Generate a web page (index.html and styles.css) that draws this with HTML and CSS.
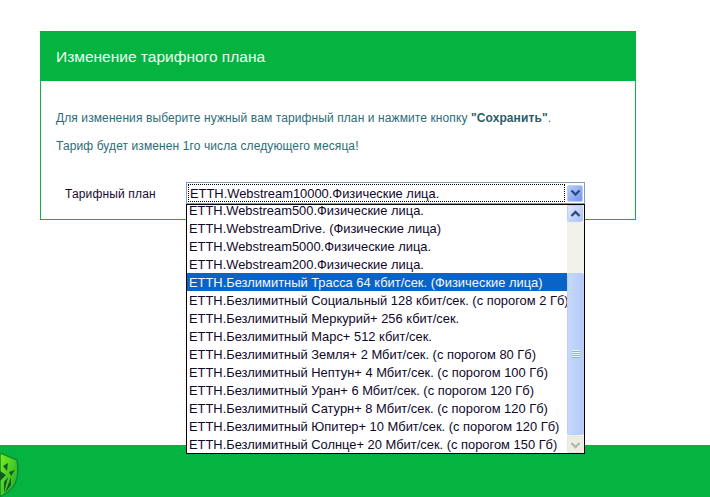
FILE: index.html
```html
<!DOCTYPE html>
<html lang="ru">
<head>
    <meta charset="UTF-8">
    <title>Изменение тарифного плана</title>
    <link rel="stylesheet" href="styles.css">
</head>
<body>
    <main class="page">
        <section class="card">
            <h1 class="card-title">Изменение тарифного плана</h1>
            <div class="card-body">
                <p class="note">Для изменения выберите нужный вам тарифный план и нажмите кнопку <strong>"Сохранить"</strong>.</p>
                <p class="note">Тариф будет изменен 1го числа следующего месяца!</p>
                <div class="field">
                    <span class="field-label">Тарифный план</span>
                    <div class="select">
                        <div class="select-box">
                            <span class="select-value">ETTH.Webstream10000.Физические лица.</span>
                            <span class="sb-btn sb-btn-main">
                                <svg width="11" height="8" viewBox="0 0 11 8"><path d="M1.5 1.5 5.5 5.5 9.5 1.5" fill="none" stroke="#2f4b7c" stroke-width="2.4"/></svg>
                            </span>
                        </div>
                        <div class="dropdown">
                            <ul class="options">
                                <li>ETTH.Webstream500.Физические лица.</li>
                                <li>ETTH.WebstreamDrive. (Физические лица)</li>
                                <li>ETTH.Webstream5000.Физические лица.</li>
                                <li>ETTH.Webstream200.Физические лица.</li>
                                <li class="is-selected">ETTH.Безлимитный Трасса 64 кбит/сек. (Физические лица)</li>
                                <li>ETTH.Безлимитный Социальный 128 кбит/сек. (с порогом 2 Гб)</li>
                                <li>ETTH.Безлимитный Меркурий+ 256 кбит/сек.</li>
                                <li>ETTH.Безлимитный Марс+ 512 кбит/сек.</li>
                                <li>ETTH.Безлимитный Земля+ 2 Мбит/сек. (с порогом 80 Гб)</li>
                                <li>ETTH.Безлимитный Нептун+ 4 Мбит/сек. (с порогом 100 Гб)</li>
                                <li>ETTH.Безлимитный Уран+ 6 Мбит/сек. (с порогом 120 Гб)</li>
                                <li>ETTH.Безлимитный Сатурн+ 8 Мбит/сек. (с порогом 120 Гб)</li>
                                <li>ETTH.Безлимитный Юпитер+ 10 Мбит/сек. (с порогом 120 Гб)</li>
                                <li>ETTH.Безлимитный Солнце+ 20 Мбит/сек. (с порогом 150 Гб)</li>
                            </ul>
                            <div class="scrollbar">
                                <span class="sb-btn">
                                    <svg width="11" height="8" viewBox="0 0 11 8"><path d="M1.5 6 5.5 2 9.5 6" fill="none" stroke="#2f4b7c" stroke-width="2.4"/></svg>
                                </span>
                                <div class="sb-track">
                                    <div class="sb-thumb"><span class="sb-grip"></span></div>
                                </div>
                                <span class="sb-btn sb-btn-off">
                                    <svg width="11" height="8" viewBox="0 0 11 8"><path d="M1.5 2 5.5 6 9.5 2" fill="none" stroke="#b4b9a8" stroke-width="2.4"/></svg>
                                </span>
                            </div>
                        </div>
                    </div>
                </div>
            </div>
        </section>
    </main>
    <footer class="footer">
        <svg class="logo" width="22" height="44" viewBox="0 0 22 44">
            <defs>
                <linearGradient id="shield" x1="0" y1="0" x2="1" y2="1">
                    <stop offset="0" stop-color="#7ff01e"/>
                    <stop offset="1" stop-color="#17a52c"/>
                </linearGradient>
            </defs>
            <path d="M0 0 17 7 Q20 24 13 34 Q8 40 0 44Z" fill="url(#shield)" stroke="#0c8f33" stroke-width="1.5"/>
            <path d="M3 13 8 10 7 18ZM9 19 15 17 11 23ZM4 29 8 24 4 40ZM0 18 6 22 0 28ZM11 24 11 32 5 40Z" fill="#0f5c24"/>
        </svg>
    </footer>
</body>
</html>
```

FILE: styles.css
```css
* { box-sizing: border-box; }
html, body { height: 100%; }
body {
    margin: 0;
    height: 497px;
    overflow: hidden;
    display: flex;
    flex-direction: column;
    background: #fff;
    font-family: "Liberation Sans", Arial, sans-serif;
}
.page {
    flex: 1;
    padding: 31px 74px 0 40px;
}
.card {
    height: 189px;
    border: 1px solid #0cb540;
}
.card-title {
    margin: -1px -1px 0;
    height: 50px;
    padding: 0 16px;
    background: #05b440;
    color: #eefff4;
    font-size: 15.5px;
    font-weight: 400;
    line-height: 52px;
}
.card-body { padding: 30px 15px 0; }
.note {
    margin: 0 0 14px;
    color: #2c6c78;
    font-size: 12px;
    letter-spacing: 0.1px;
    line-height: 14px;
}
.note strong { color: #2c5c68; }
.field {
    display: flex;
    align-items: flex-start;
    margin-top: 29px;
}
.field-label {
    width: 130px;
    padding: 5px 0 0 9px;
    color: #1a0a33;
    font-size: 12px;
    letter-spacing: 0.15px;
    line-height: 14px;
}
.select {
    position: relative;
    width: 399px;
}
.select-box {
    display: flex;
    align-items: center;
    height: 22px;
    padding: 1px;
    border: 1px solid #7f9db9;
    background: #fff;
}
.select-value {
    flex: 1;
    height: 18px;
    margin-right: 2px;
    padding-left: 1px;
    border: 1px dotted #000;
    color: #10082a;
    font-size: 12.9px;
    line-height: 18px;
    white-space: nowrap;
}
.sb-btn {
    display: flex;
    align-items: center;
    justify-content: center;
    width: 16px;
    height: 17px;
    flex: none;
    border: 1px solid #bcd0f5;
    border-radius: 2px;
    background: linear-gradient(135deg, #dfe9fd, #a9c3f7);
}
.sb-btn-main { background: linear-gradient(135deg, #b7cdf9, #6f95ee); }
.sb-btn-off {
    border-color: #e8e8e0;
    background: #eeede5;
}
.dropdown {
    position: absolute;
    top: 22px;
    left: 0;
    z-index: 5;
    display: flex;
    width: 399px;
    height: 250px;
    border: 1px solid #000;
    background: #fff;
    overflow: hidden;
}
.options {
    flex: 1;
    min-width: 0;
    margin: 0;
    padding: 0;
    list-style: none;
    color: #10082a;
    font-size: 12.9px;
}
.options li {
    height: 18px;
    padding-left: 2px;
    line-height: 20px;
    white-space: nowrap;
}
.options li:first-child { margin-top: -4px; }
.options .is-selected {
    background: #0a64c8;
    color: #f4f8ff;
}
.scrollbar {
    display: flex;
    flex-direction: column;
    width: 17px;
    flex: none;
    background: #f3f2ea;
}
.sb-track {
    flex: 1;
    padding-top: 51px;
}
.sb-thumb {
    display: flex;
    align-items: center;
    justify-content: center;
    height: 162px;
    border: 1px solid #bcd0f5;
    border-radius: 2px;
    background: linear-gradient(90deg, #c6d8fb, #b3cbfa);
}
.sb-grip {
    width: 8px;
    height: 8px;
    background: repeating-linear-gradient(#f2f6ff 0 1px, #8eacea 1px 2px);
}
.footer {
    height: 52px;
    flex: none;
    background: #05b440;
}
.logo {
    display: block;
    margin-top: 8px;
}
```
